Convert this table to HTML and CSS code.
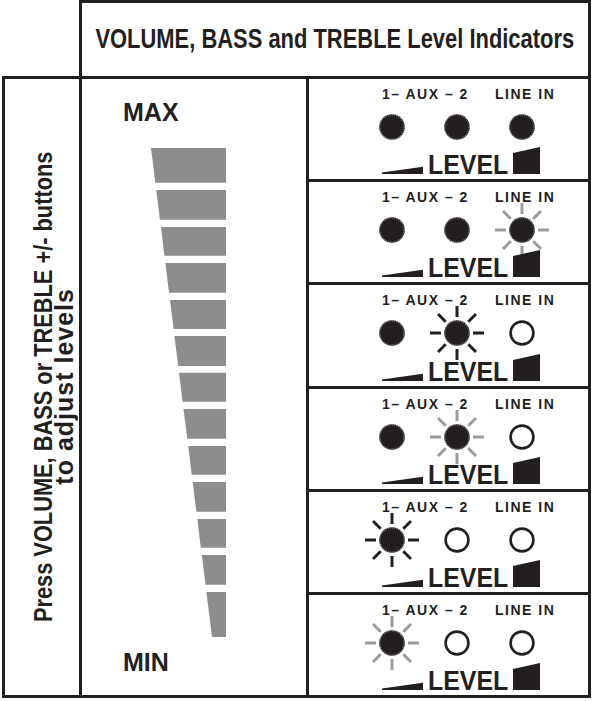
FILE: index.html
```html
<!DOCTYPE html>
<html lang="en">
<head>
    <meta charset="UTF-8">
    <meta name="viewport" content="width=device-width, initial-scale=1.0">
    <title>VOLUME, BASS and TREBLE Level Indicators</title>
    <link rel="stylesheet" href="styles.css">
</head>
<body>
    <svg class="defs" width="0" height="0" aria-hidden="true">
        <defs>
            <symbol id="led-on" viewBox="-28 -28 56 56">
                <circle r="12.8" fill="#231f20"></circle>
                <circle r="12.2" fill="none" stroke="#8a8a8a" stroke-width="1.3" stroke-dasharray="1 1.2"></circle>
            </symbol>
            <symbol id="led-off" viewBox="-28 -28 56 56">
                <circle r="11.4" fill="#fff" stroke="#231f20" stroke-width="2.6"></circle>
            </symbol>
            <symbol id="rays" viewBox="-28 -28 56 56">
                <g stroke="currentColor" stroke-width="3">
                    <line x1="0" y1="-16" x2="0" y2="-27"></line>
                    <line x1="0" y1="16" x2="0" y2="27"></line>
                    <line x1="-16" y1="0" x2="-27" y2="0"></line>
                    <line x1="16" y1="0" x2="27" y2="0"></line>
                    <line x1="11.3" y1="-11.3" x2="19" y2="-19"></line>
                    <line x1="-11.3" y1="-11.3" x2="-19" y2="-19"></line>
                    <line x1="11.3" y1="11.3" x2="19" y2="19"></line>
                    <line x1="-11.3" y1="11.3" x2="-19" y2="19"></line>
                </g>
            </symbol>
            <symbol id="wedge" viewBox="0 0 42 8">
                <polygon points="0,8 0,6.6 41,0.8 41,8" fill="#231f20"></polygon>
            </symbol>
            <symbol id="block" viewBox="0 0 27 27">
                <polygon points="0,6 27,0 27,27 0,27" fill="#231f20"></polygon>
            </symbol>
        </defs>
    </svg>

    <div class="sheet">
        <div class="title-box">
            <h1 class="title">VOLUME, BASS and TREBLE Level Indicators</h1>
        </div>

        <div class="chart">
            <div class="hint">
                <p class="hint-text">
                    <span class="hint-line">Press VOLUME, BASS or TREBLE +/- buttons</span>
                    <span class="hint-line hint-line-sub">to adjust levels</span>
                </p>
            </div>

            <div class="scale">
                <div class="scale-label">MAX</div>
                <svg class="bars" width="75" height="489" viewBox="0 0 75 489">
                    <polygon points="0,0 75,0 75,34.7 4.3,34.7"></polygon>
                    <polygon points="5.2,42 75,42 75,71.7 8.9,71.7"></polygon>
                    <polygon points="9.9,79 75,79 75,107.7 13.4,107.7"></polygon>
                    <polygon points="14.3,115 75,115 75,144.7 18,144.7"></polygon>
                    <polygon points="19,152 75,152 75,181 22.6,181"></polygon>
                    <polygon points="23.4,188 75,188 75,218 27.2,218"></polygon>
                    <polygon points="28,224.7 75,224.7 75,253.7 31.6,253.7"></polygon>
                    <polygon points="32.5,261 75,261 75,290.7 36.3,290.7"></polygon>
                    <polygon points="37.2,298 75,298 75,326.7 40.7,326.7"></polygon>
                    <polygon points="41.6,334 75,334 75,363.7 45.4,363.7"></polygon>
                    <polygon points="46.3,371 75,371 75,399.7 49.8,399.7"></polygon>
                    <polygon points="50.8,407 75,407 75,436.7 54.5,436.7"></polygon>
                    <polygon points="55.4,444 75,444 75,489 61,489"></polygon>
                </svg>
                <div class="scale-label scale-label-min">MIN</div>
            </div>

            <div class="states">
                <div class="state">
                    <div class="inputs"><span class="input-aux">1– AUX – 2</span><span class="input-line">LINE IN</span></div>
                    <div class="leds">
                        <svg class="led"><use href="#led-on"></use></svg>
                        <svg class="led"><use href="#led-on"></use></svg>
                        <svg class="led"><use href="#led-on"></use></svg>
                    </div>
                    <div class="level">
                        <svg class="wedge"><use href="#wedge"></use></svg>
                        <span class="level-text">LEVEL</span>
                        <svg class="block"><use href="#block"></use></svg>
                    </div>
                </div>

                <div class="state">
                    <div class="inputs"><span class="input-aux">1– AUX – 2</span><span class="input-line">LINE IN</span></div>
                    <div class="leds">
                        <svg class="led"><use href="#led-on"></use></svg>
                        <svg class="led"><use href="#led-on"></use></svg>
                        <svg class="led led-dim"><use href="#rays"></use><use href="#led-on"></use></svg>
                    </div>
                    <div class="level">
                        <svg class="wedge"><use href="#wedge"></use></svg>
                        <span class="level-text">LEVEL</span>
                        <svg class="block"><use href="#block"></use></svg>
                    </div>
                </div>

                <div class="state">
                    <div class="inputs"><span class="input-aux">1– AUX – 2</span><span class="input-line">LINE IN</span></div>
                    <div class="leds">
                        <svg class="led"><use href="#led-on"></use></svg>
                        <svg class="led led-bright"><use href="#rays"></use><use href="#led-on"></use></svg>
                        <svg class="led"><use href="#led-off"></use></svg>
                    </div>
                    <div class="level">
                        <svg class="wedge"><use href="#wedge"></use></svg>
                        <span class="level-text">LEVEL</span>
                        <svg class="block"><use href="#block"></use></svg>
                    </div>
                </div>

                <div class="state">
                    <div class="inputs"><span class="input-aux">1– AUX – 2</span><span class="input-line">LINE IN</span></div>
                    <div class="leds">
                        <svg class="led"><use href="#led-on"></use></svg>
                        <svg class="led led-dim"><use href="#rays"></use><use href="#led-on"></use></svg>
                        <svg class="led"><use href="#led-off"></use></svg>
                    </div>
                    <div class="level">
                        <svg class="wedge"><use href="#wedge"></use></svg>
                        <span class="level-text">LEVEL</span>
                        <svg class="block"><use href="#block"></use></svg>
                    </div>
                </div>

                <div class="state">
                    <div class="inputs"><span class="input-aux">1– AUX – 2</span><span class="input-line">LINE IN</span></div>
                    <div class="leds">
                        <svg class="led led-bright"><use href="#rays"></use><use href="#led-on"></use></svg>
                        <svg class="led"><use href="#led-off"></use></svg>
                        <svg class="led"><use href="#led-off"></use></svg>
                    </div>
                    <div class="level">
                        <svg class="wedge"><use href="#wedge"></use></svg>
                        <span class="level-text">LEVEL</span>
                        <svg class="block"><use href="#block"></use></svg>
                    </div>
                </div>

                <div class="state">
                    <div class="inputs"><span class="input-aux">1– AUX – 2</span><span class="input-line">LINE IN</span></div>
                    <div class="leds">
                        <svg class="led led-dim"><use href="#rays"></use><use href="#led-on"></use></svg>
                        <svg class="led"><use href="#led-off"></use></svg>
                        <svg class="led"><use href="#led-off"></use></svg>
                    </div>
                    <div class="level">
                        <svg class="wedge"><use href="#wedge"></use></svg>
                        <span class="level-text">LEVEL</span>
                        <svg class="block"><use href="#block"></use></svg>
                    </div>
                </div>
            </div>
        </div>
    </div>
</body>
</html>
```

FILE: styles.css
```css
* {
    margin: 0;
    padding: 0;
    box-sizing: border-box;
}

body {
    background: #fff;
    color: #231f20;
    font-family: 'Liberation Sans', Arial, sans-serif;
    font-weight: bold;
}

.defs {
    position: absolute;
    width: 0;
    height: 0;
}

.sheet {
    width: 589px;
    margin-left: 2px;
}

.title-box {
    margin-left: 77px;
    height: 76px;
    border: 3px solid #231f20;
    border-bottom: none;
    display: flex;
    align-items: center;
    justify-content: center;
}

/* the print face is a condensed grotesque, so the Arial-width face is narrowed */
.title {
    flex-shrink: 0;
    font-size: 27px;
    font-weight: bold;
    line-height: 27px;
    white-space: nowrap;
    transform: scaleX(0.812);
}

.chart {
    height: 622px;
    border: 3px solid #231f20;
    display: grid;
    grid-template-columns: 74px 227px 1fr;
}

/* rotated instruction column */
.hint {
    display: flex;
    align-items: center;
    justify-content: center;
    padding-left: 23px;
}

.hint-text {
    writing-mode: vertical-rl;
    transform: rotate(180deg);
    text-align: center;
    font-size: 25px;
    line-height: 21px;
    white-space: nowrap;
}

.hint-line {
    display: block;
    transform: scaleY(0.872);
}

.hint-line-sub {
    transform: none;
    letter-spacing: 1px;
}

/* MAX / MIN bar scale */
.scale {
    border-left: 3px solid #231f20;
    display: flex;
    flex-direction: column;
    padding-left: 41px;
    padding-top: 21px;
}

.scale-label {
    font-size: 25px;
    line-height: 25px;
}

.scale-label-min {
    margin-top: 13px;
}

.bars {
    display: block;
    margin-top: 23px;
    margin-left: 28px;
    fill: #8e8d8d;
}

/* indicator rows */
.states {
    border-left: 3px solid #231f20;
    display: flex;
    flex-direction: column;
}

.state {
    flex: 1 1 0;
    min-height: 0;
    display: flex;
    flex-direction: column;
    padding-top: 8px;
    padding-bottom: 4px;
}

.state + .state {
    border-top: 3px solid #231f20;
}

.inputs {
    display: flex;
    padding-left: 73px;
    font-size: 14px;
    line-height: 14px;
    letter-spacing: 1.5px;
    white-space: pre;
}

.input-aux {
    width: 113px;
}

.leds {
    display: flex;
    gap: 9px;
    padding-left: 55px;
    margin-top: -2px;
    margin-bottom: -8px;
}

.led {
    width: 56px;
    height: 56px;
    overflow: visible;
}

.led-bright {
    color: #231f20;
}

.led-dim {
    color: #9b9b9b;
}

.level {
    margin-top: auto;
    display: flex;
    align-items: baseline;
    padding-left: 73px;
}

.wedge {
    width: 42px;
    height: 8px;
}

.level-text {
    font-size: 28px;
    line-height: 20px;
    margin-left: -1px;
    transform: scaleX(0.89);
}

.block {
    width: 27px;
    height: 27px;
}
```
